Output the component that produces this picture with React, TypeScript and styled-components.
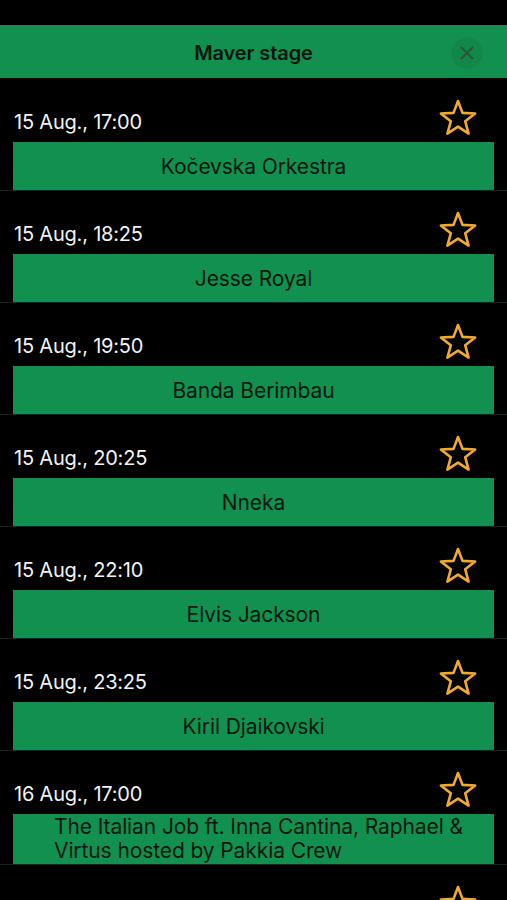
import React from "react";
import styled, { createGlobalStyle } from "styled-components";

const GlobalStyle = createGlobalStyle`
  html, body {
    margin: 0;
    padding: 0;
    background: #000;
  }
  body {
    font-family: Inter, "Noto Sans", sans-serif;
    -webkit-font-smoothing: antialiased;
  }
`;

const GREEN = "#12904f";

const Page = styled.div`
  padding-top: 25px;
  background: #000;
  min-height: 100vh;
  overflow: hidden;
`;

const Header = styled.header`
  display: grid;
  grid-template-columns: 1fr auto 1fr;
  align-items: center;
  height: 53px;
  padding-top: 3px;
  box-sizing: border-box;
  background-color: ${GREEN};
`;

const Title = styled.h1`
  grid-column: 2;
  margin: 0;
  font-size: 20px;
  font-weight: 600;
  color: #08160d;
  letter-spacing: -0.1px;
`;

const CloseButton = styled.button`
  grid-column: 3;
  justify-self: end;
  margin-right: 24px;
  width: 32px;
  height: 32px;
  border-radius: 50%;
  border: none;
  padding: 0;
  background: rgba(0, 0, 0, 0.05);
  display: flex;
  align-items: center;
  justify-content: center;
  cursor: pointer;
`;

const List = styled.ul`
  list-style: none;
  margin: 0;
  padding: 1px 0 0;
`;

const Row = styled.li`
  padding: 0 13px;
  border-bottom: 1px solid #18231d;
`;

const RowTop = styled.div`
  display: flex;
  justify-content: space-between;
  align-items: flex-end;
  height: 63px;
  padding-bottom: 8px;
  box-sizing: border-box;
`;

const DateText = styled.span`
  padding-left: 1px;
  font-size: 20px;
  line-height: 24px;
  color: #f4f4f4;
  letter-spacing: -0.2px;
`;

const StarButton = styled.button`
  width: 40px;
  height: 40px;
  margin: 0 16px -4px 0;
  padding: 0;
  border: none;
  background: none;
  cursor: pointer;
`;

const Bar = styled.div<{ $multi?: boolean }>`
  display: flex;
  align-items: center;
  justify-content: center;
  min-height: 48px;
  background-color: ${GREEN};
  box-sizing: border-box;
  padding: ${(p) => (p.$multi ? "1px 18px 1px 41px" : "1px 12px 0")};
`;

const Name = styled.span<{ $multi?: boolean }>`
  font-size: 21px;
  line-height: 24px;
  color: #08180e;
  letter-spacing: -0.1px;
  text-align: ${(p) => (p.$multi ? "left" : "center")};
  width: ${(p) => (p.$multi ? "100%" : "auto")};
`;

const Star = () => (
  <svg width="40" height="40" viewBox="0 0 40 40">
    <polygon
      points="20,3 24.47,14.85 37.12,15.44 27.23,23.35 30.58,35.56 20,28.6 9.42,35.56 12.77,23.35 2.88,15.44 15.53,14.85"
      fill="none"
      stroke="#f2a930"
      strokeWidth="2.6"
      strokeLinejoin="round"
    />
  </svg>
);

const CloseIcon = () => (
  <svg width="14" height="14" viewBox="0 0 14 14">
    <path
      d="M1.5 1.5 L12.5 12.5 M12.5 1.5 L1.5 12.5"
      stroke="#2c5439"
      strokeWidth="2"
      strokeLinecap="round"
    />
  </svg>
);

type Show = { date: string; name: string; multi?: boolean };

const shows: Show[] = [
  { date: "15 Aug., 17:00", name: "Kočevska Orkestra" },
  { date: "15 Aug., 18:25", name: "Jesse Royal" },
  { date: "15 Aug., 19:50", name: "Banda Berimbau" },
  { date: "15 Aug., 20:25", name: "Nneka" },
  { date: "15 Aug., 22:10", name: "Elvis Jackson" },
  { date: "15 Aug., 23:25", name: "Kiril Djaikovski" },
  {
    date: "16 Aug., 17:00",
    name: "The Italian Job ft. Inna Cantina, Raphael & Virtus hosted by Pakkia Crew",
    multi: true,
  },
  { date: "16 Aug., 18:30", name: "Dubioza Kolektiv" },
];

export default function App() {
  return (
    <Page>
      <GlobalStyle />
      <Header>
        <Title>Maver stage</Title>
        <CloseButton aria-label="Close">
          <CloseIcon />
        </CloseButton>
      </Header>
      <List>
        {shows.map((s) => (
          <Row key={s.date + s.name}>
            <RowTop>
              <DateText>{s.date}</DateText>
              <StarButton aria-label="Favourite">
                <Star />
              </StarButton>
            </RowTop>
            <Bar $multi={s.multi}>
              <Name $multi={s.multi}>{s.name}</Name>
            </Bar>
          </Row>
        ))}
      </List>
    </Page>
  );
}
